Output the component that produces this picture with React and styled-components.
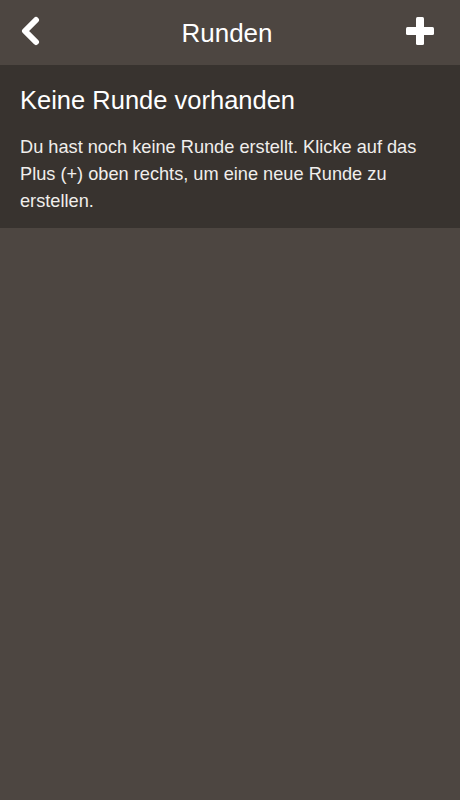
import React from 'react';
import styled, { createGlobalStyle } from 'styled-components';

const GlobalStyle = createGlobalStyle`
  html, body {
    margin: 0;
    padding: 0;
    background: #4d4641;
  }
  body {
    font-family: 'Liberation Sans', Arial, sans-serif;
    color: #fff;
  }
`;

const Page = styled.div`
  width: 460px;
  min-height: 800px;
  background: #4d4641;
  display: flex;
  flex-direction: column;
`;

const Header = styled.header`
  height: 65px;
  display: flex;
  align-items: center;
  justify-content: space-between;
  padding: 0 26px 4px 20px;
  box-sizing: border-box;
`;

const Title = styled.h1`
  margin: 0;
  padding-top: 4px;
  font-size: 26px;
  font-weight: 400;
  line-height: 30px;
  color: #fff;
  flex: 1;
  text-align: center;
`;

const IconButton = styled.button`
  background: none;
  border: none;
  padding: 0;
  width: 30px;
  height: 30px;
  display: flex;
  align-items: center;
  justify-content: ${({ align }) => align || 'center'};
  cursor: pointer;
`;

const Panel = styled.section`
  background: #38332f;
  padding: 20px 20px 13px;
`;

const PanelTitle = styled.h2`
  margin: 0 0 19px;
  font-size: 25.5px;
  font-weight: 400;
  line-height: 30px;
`;

const PanelText = styled.p`
  margin: 0;
  font-size: 18.2px;
  line-height: 27px;
  color: #f0eeec;
`;

function BackIcon() {
  return (
    <svg width="20" height="30" viewBox="0 0 20 30">
      <path d="M16 4 L5 15 L16 26" fill="none" stroke="#fff" strokeWidth="6" strokeLinecap="round" strokeLinejoin="round" />
    </svg>
  );
}

function PlusIcon() {
  return (
    <svg width="28" height="28" viewBox="0 0 28 28">
      <rect x="10" y="0" width="8" height="28" rx="1.5" fill="#fff" />
      <rect x="0" y="10" width="28" height="8" rx="1.5" fill="#fff" />
    </svg>
  );
}

export default function App() {
  return (
    <>
      <GlobalStyle />
      <Page>
        <Header>
          <IconButton align="flex-start"><BackIcon /></IconButton>
          <Title>Runden</Title>
          <IconButton align="flex-end"><PlusIcon /></IconButton>
        </Header>
        <Panel>
          <PanelTitle>Keine Runde vorhanden</PanelTitle>
          <PanelText>
            Du hast noch keine Runde erstellt. Klicke auf das Plus (+) oben rechts, um eine neue Runde zu erstellen.
          </PanelText>
        </Panel>
      </Page>
    </>
  );
}
